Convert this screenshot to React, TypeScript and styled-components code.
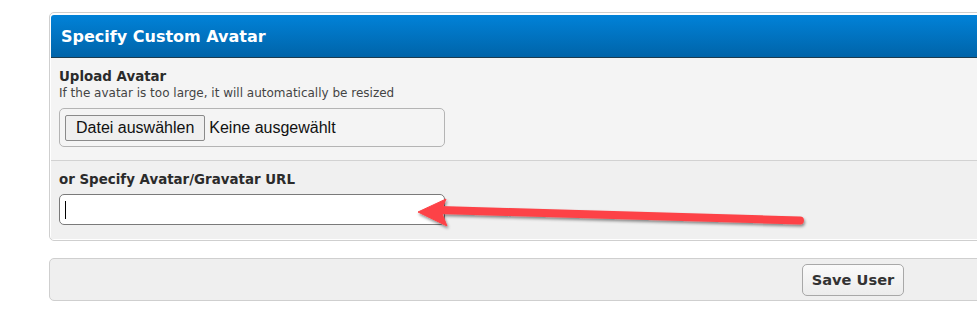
import React from "react";
import styled, { createGlobalStyle } from "styled-components";

const Global = createGlobalStyle`
  html, body { margin: 0; padding: 0; background: #fff; overflow: hidden; }
  body { width: 977px; height: 317px; position: relative; }
`;

const Page = styled.div`
  padding: 12px 0 0 49px;
  display: flex;
  flex-direction: column;
  gap: 17px;
  width: 1608px;
`;

const Panel = styled.div`
  border: 1px solid #cfcfcf;
  border-radius: 5px;
  padding: 1px;
  background: #fff;
  font-family: "DejaVu Sans", Verdana, sans-serif;
`;

const Header = styled.div`
  margin-top: 1px;
  height: 43px;
  background: linear-gradient(#0182d8, #0064a9);
  border-bottom: 1px solid #1b3c50;
  border-radius: 3px 3px 0 0;
  display: flex;
  align-items: center;
  padding: 1px 0 0 10px;
  box-sizing: border-box;
  color: #fff;
  font-weight: bold;
  font-size: 16px;
`;

const Section = styled.div<{ $bg: string; $divider?: boolean }>`
  background: ${(p) => p.$bg};
  border-top: ${(p) => (p.$divider ? "1px solid #d2d2d2" : "none")};
  padding: ${(p) => (p.$divider ? "10px 8px 14px 8px" : "10px 8px 13px 8px")};
  display: flex;
  flex-direction: column;
`;

const Label = styled.div`
  font-weight: bold;
  font-size: 13.4px;
  color: #2b2b2b;
  line-height: 17px;
`;

const Desc = styled.div`
  font-size: 12px;
  color: #444;
  line-height: 17px;
  margin-bottom: 6px;
`;

const FileBox = styled.div`
  width: 386px;
  height: 39px;
  box-sizing: border-box;
  border: 1px solid #b4b4b4;
  border-radius: 5px;
  display: flex;
  align-items: center;
  padding-left: 5px;
  gap: 4px;
  font-family: "Liberation Sans", Arial, sans-serif;
  font-size: 16px;
  color: #111;
`;

const FileButton = styled.div`
  height: 26px;
  box-sizing: border-box;
  border: 1px solid #8a8a8a;
  background: #efefef;
  border-radius: 2px;
  padding: 0 10px;
  display: flex;
  align-items: center;
`;

const UrlInput = styled.div`
  width: 386px;
  height: 31px;
  box-sizing: border-box;
  margin-top: 6px;
  border: 1px solid #7a7a7a;
  border-radius: 5px;
  background: #fff;
  display: flex;
  align-items: center;
  padding-left: 5px;
`;

const Caret = styled.div`
  width: 1px;
  height: 18px;
  background: #000;
`;

const SaveBar = styled.div`
  height: 43px;
  box-sizing: border-box;
  border: 1px solid #cfcfcf;
  border-radius: 5px;
  background: #efefef;
  display: flex;
  align-items: center;
  justify-content: center;
`;

const SaveButton = styled.button`
  height: 32px;
  width: 102px;
  border: 1px solid #a8a8a8;
  border-radius: 5px;
  background: linear-gradient(#fafafa, #ececec);
  font-family: "DejaVu Sans", Verdana, sans-serif;
  font-weight: bold;
  font-size: 14.6px;
  color: #333;
  padding: 0;
`;

const Overlay = styled.svg`
  position: absolute;
  left: 0;
  top: 0;
  pointer-events: none;
`;

export default function App() {
  return (
    <>
      <Global />
      <Page>
        <Panel>
          <Header>Specify Custom Avatar</Header>
          <Section $bg="#f4f4f4">
            <Label>Upload Avatar</Label>
            <Desc>If the avatar is too large, it will automatically be resized</Desc>
            <FileBox>
              <FileButton>Datei auswählen</FileButton>
              <span>Keine ausgewählt</span>
            </FileBox>
          </Section>
          <Section $bg="#f0f0f0" $divider>
            <Label>or Specify Avatar/Gravatar URL</Label>
            <UrlInput>
              <Caret />
            </UrlInput>
          </Section>
        </Panel>
        <SaveBar>
          <SaveButton>Save User</SaveButton>
        </SaveBar>
      </Page>
      <Overlay width="977" height="317" viewBox="0 0 977 317">
        <defs>
          <filter id="sh" x="-10%" y="-50%" width="120%" height="200%">
            <feDropShadow dx="1" dy="2" stdDeviation="1.5" floodColor="#000" floodOpacity="0.45" />
          </filter>
        </defs>
        <g filter="url(#sh)" fill="#fd4347" stroke="#fd4347">
          <line x1="440" y1="210" x2="800" y2="220.5" strokeWidth="8" strokeLinecap="round" />
          <path d="M418 212 L446 199 L441 211 L447 226 Z" strokeWidth="1" strokeLinejoin="round" />
        </g>
      </Overlay>
    </>
  );
}
